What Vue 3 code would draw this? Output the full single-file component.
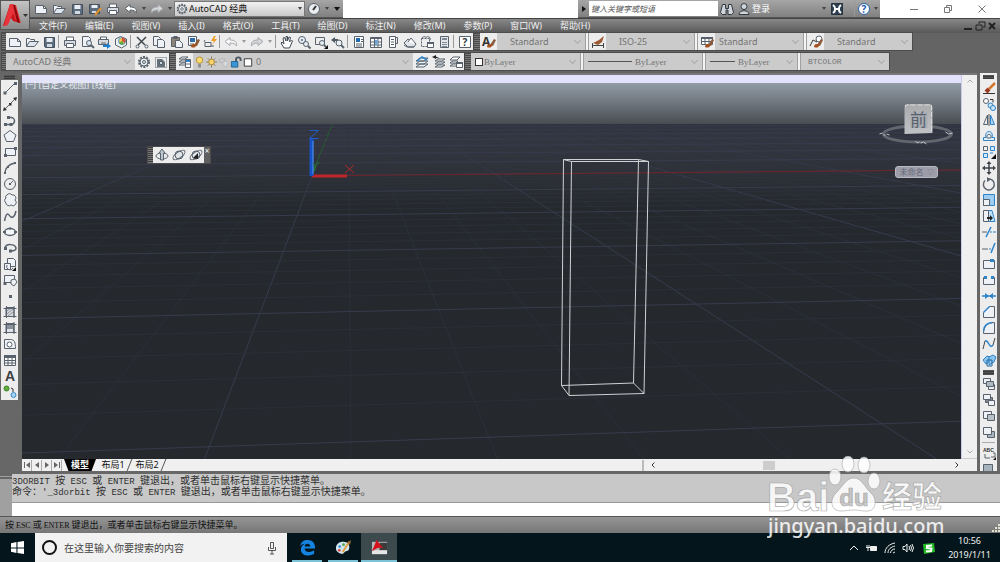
<script setup>
const D = '#59626c'
const B = '#2f83c9'
const s = (d, c = D, w = 1) => `<path d="${d}" fill="none" stroke="${c}" stroke-width="${w}"/>`
const f = (d, c = '#eef1f6', o = D) => `<path d="${d}" fill="${c}" stroke="${o}"/>`
const p = (d, c = D) => `<path d="${d}" fill="${c}"/>`
const c = (x, y, r, fill = 'none', o = D) => `<circle cx="${x}" cy="${y}" r="${r}" fill="${fill}" stroke="${o}"/>`
const brush = p('M9 11l4-6 2 1-3 6z', '#8a5a3a') + p('M6 13c0-3 3-4 5-2 0 3-3 3-5 2z', '#a8501c')

const icons = {
  new: f('M2.500 4.500h8l3 3v5h-11z') + s('M10.500 4.500v3h3'),
  open: f('M2.500 12.500v-8h3l1 1h4v2') + f('M2.500 12.500l3-5h9l-4 5z', '#dfe6ee'),
  save: f('M3.500 3.500h10v10h-9l-1-1z', '#5c6d80', '#46515d') + p('M5.500 4h6v4h-6z', '#e8edf3') + p('M6 10h5v3h-5z', '#d3dae2'),
  saveas: f('M2.500 3.500h10v9h-10z', '#5c6d80', '#46515d') + p('M4.500 4h6v3h-6z', '#e8edf3') + p('M5 10h4v2h-4z', '#d3dae2') + s('M8 14l6-7', '#e0912c', 2),
  print: f('M4.500 7v-4h7v4', '#fff') + f('M2.500 6.500h11v5h-11z', '#d7dce2') + f('M4.500 9.500h7v4h-7z', '#fff'),
  preview: f('M3.500 2.500h6l2 2v8h-8z') + c(10, 9, 2.500, '#dce9f5') + s('M12 11l3 3', D, 2),
  publish: f('M4.500 6v-3h6v3', '#fff') + f('M2.500 5.500h10v5h-10z', '#d7dce2') + s('M5 9h5') + p('M7 11h4V9l4 3-4 3v-2H7z', '#1d7fd1'),
  dwf: f('M2.500 5l5-2.500 6 2.500v6l-5 3-6-3z') + c(9, 7, 3.500, '#f1c34b', '#48a0cf') + p('M9 7V3a4 4 0 013 6z', '#d4513a') + p('M9 7l-3 2a4 4 0 005 1z', '#62a83f'),
  cut: s('M3 3l8 8M12 3l-8 8', '#3e464f', 1.500) + c(3.500, 12.500, 1.500, '#eee') + c(12.500, 12.500, 1.500, '#eee'),
  copy: f('M2.500 2.500h5l2 2v7h-7z') + f('M6.500 5.500h5l2 2v6h-7z'),
  paste: f('M3.500 3.500h8v9h-8z', '#8d8478') + p('M5.500 2h4v3h-4z') + f('M7.500 6.500h4l3 3v4h-7z'),
  match: f('M3.500 2.500h8v9h-8z', '#f6f8fa') + p('M5 4h5v4H5z', '#2e6ca8') + s('M5 10h4') + brush,
  blockedit: s('M3 8.500h6v4h-6z') + s('M3 6l-1 2M9 12h3') + p('M12 2l-3 5h3l-2 4 5-6h-3l2-3z', '#f29a22'),
  undo: f('M2 7.500l5-4v2.500c5 0 7 2 6.500 6-1-2-3-3-6.500-3v2.500z', '#fff'),
  redo: f('M14 7.500l-5-4v2.500c-5 0-7 2-6.500 6 1-2 3-3 6.500-3v2.500z', '#d4d6d9', '#a6a9ad'),
  undoOff: f('M2 7.500l5-4v2.500c5 0 7 2 6.500 6-1-2-3-3-6.500-3v2.500z', '#f6f6f6', '#a6a9ad'),
  pan: f('M5 14l-3-5 1-1 2 2-1-6 1.500-.500L7 7V2.500h1.500V7l1.500-4 1.500.500L10.500 8l2-2 1 1-3 7z', '#fff', '#434b54'),
  zoomrt: c(6, 6, 3.500, '#e8f0f6') + s('M5 6h2M6 5v2') + c(10, 10, 2.500, '#e8f0f6') + s('M12 12l2.500 2.500', D, 2),
  zoomwin: s('M2.500 3.500h9v7h-9z') + c(9, 9, 2.500, '#e8f0f6') + s('M11 11l2 2', D, 2) + p('M15 11v4h-4z', '#111'),
  zoomprev: p('M1 6l4-3v2h3v2H5v2z', '#4f5964') + c(9, 9, 3, '#e8f0f6') + s('M11 11l3 3', D, 2),
  props: f('M3.500 2.500h9v11h-9z', '#fff') + p('M5 4h4v4H5z', '#2468ad') + s('M10 5.500h2M10 7.500h2M5 10h6M5 12h6'),
  dc: f('M2.500 3.500h11v10h-11z', '#fff') + p('M3 3h10v2H3z') + s('M6.500 5v8M10 5v8M3 8h10M3 11h10') + p('M7 6h3v5H7z', '#76a7d4'),
  palettes: f('M4.500 2.500h6v11h-6z', '#fff') + s('M10.500 3.500h2v6h-2M6 5.500h3M6 8h3M6 10.500h3'),
  sheet: f('M2 9l4-4 8 5-2 3H6z', '#dfe5ea') + f('M6 8l3-4 5 6', '#fff') + s('M2 11l3 2h7'),
  markup: s('M3 4c2-3 4 0 5-1s4 0 3 3', D) + `<path d="M2.500 4.500h8v8h-8z" fill="none" stroke="${D}" stroke-dasharray="2 1"/>` + f('M8.500 8.500h6v5h-6z', '#fff') + p('M8 8h7v2H8z'),
  calc: f('M4.500 2.500h8v11h-8z', '#e3e7eb') + p('M6 4h5v2H6z', '#7a8794') + s('M6 8.500h5M6 10.500h5M6 12.500h5', '#7f8992'),
  help: f('M2.500 2.500h11v11h-11z', '#fff') + `<text x="8" y="12" text-anchor="middle" font-size="10" font-weight="700" font-family="Open Sans, sans-serif" fill="#2d3742">?</text>`,
  textStyle: `<text x="1" y="12" font-size="12" font-weight="700" font-family="Open Sans, sans-serif" fill="#333">A</text>` + brush,
  dimStyle: s('M2.500 9v5M13.500 9v5M3 11.500h10', '#444') + p('M3 9l6-3 5-4-2 6-4 3z', '#9d5a32'),
  tableStyle: f('M2.500 3.500h11v7h-11z', '#fff') + p('M2 3h12v2H2z') + s('M6 5v5M10 5v5M3 7.500h10') + brush,
  leaderStyle: s('M2 12l3-6 4 2', '#333') + c(11, 5, 3, '#fff') + brush,
  gear: `<circle cx="8" cy="8" r="5" fill="none" stroke="${D}" stroke-width="2" stroke-dasharray="2 1.140"/>` + c(8, 8, 4, '#edf0f3') + c(8, 8, 1.500),
  wssave: `<path d="M2.500 3.500h11v10h-11z" fill="none" stroke="${D}" stroke-dasharray="1 1"/>` + p('M4 5h5l3 3v5H4z', '#66717c') + f('M6.500 7.500h3v3h-3z', '#cfd6dc'),
  layers: f('M2 5l3-2h6L8 5zM2 8l3-2h6L8 8zM2 11l3-2h5L8 11z', '#fff') + f('M8.500 5.500h5v8h-5z', '#fff') + p('M9 6h4v2H9z', B) + s('M9 10h4'),
  layerMatch: f('M2 7l4-3h8l-4 3zM2 10l4-3h8l-4 3zM2 13l4-3h8l-4 3z', '#eaf4fb') + s('M3 7l5-4 5 3', B, 1.500),
  layerPrev: f('M4 7l3-2h7l-3 2zM4 10l3-2h7l-3 2zM4 13l3-2h7l-3 2z', '#fff') + p('M1 3l4-2v1.500l4 2-4-.500V5z', '#222'),
  layerStates: f('M2 6l3-3h7L9 6zM2 9l3-2h5L8 9zM2 12l3-2h5L8 12z', '#fff') + f('M8.500 8.500h6v5h-6z', '#fff') + p('M8 8h7v2H8z'),
  bulb: c(8, 6, 3.500, '#fbdc74', '#b18b32') + p('M6.500 10h3v4h-3z', '#8b8f94'),
  sun: s('M8 2v12M2 8h12M4 4l8 8M12 4l-8 8', '#87764e') + c(8, 8, 3, '#fbd569', '#a98a38'),
  freeze: s('M3.500 4.500h6v4h-6z', '#b5b7b9') + c(10, 10, 3, '#d7d8d9', '#b5b7b9'),
  lock: s('M8.500 8V5.500a2.500 2.500 0 015 0V7', '#4c565f', 2) + f('M3.500 7.500h7v6h-7z', '#3797d6', '#28628b'),
  swatch: f('M4.500 4.500h8v8h-8z', '#fff', '#333'),
  gauge: c(8, 8, 5.500, '#e9edf0') + s('M7 9l3-4', '#333', 2),
  line: s('M3 13L13 3') + p('M1.500 11.500h3v3h-3zM12 2h3v3h-3z'),
  xline: s('M3 13L13 3') + p('M1 15l1-4 3 3zM15 1l-1 4-3-3zM7 7h2.500v2.500H7z', '#333'),
  pline: s('M3 12.500h6a3.500 3.500 0 000-7H6', D, 1.500) + p('M2 11h3v3H2zM7.500 11h3v3h-3zM5 4h3v3H5z'),
  polygon: f('M8 2.500l6 4.500-2.500 6.500h-7L2 7z'),
  rect: f('M3.500 4.500h10v7h-10z') + p('M2 10h3v3H2zM12 3h3v3h-3z'),
  arc: s('M3 13C3 8 7 4 13 3', D, 1.500) + p('M2 12h2v2H2zM5 6h2v2H5zM12 2h2v2h-2z'),
  circle: c(8, 8, 5.500) + s('M8 8l3-3') + p('M7 7h2v2H7z'),
  cloud: f('M5 3a3 3 0 015 0 3 3 0 013 5 3 3 0 01-4 5 3 3 0 01-5-2 3 3 0 010-5 2 2 0 011-3z'),
  spline: s('M2.500 13C5 1 7 8 9 9s4-1 5-6', D, 1.500),
  ellipse: `<ellipse cx="8" cy="8" rx="5.500" ry="3.500" fill="#f6f7f9" stroke="${D}" stroke-width="1.500"/>` + p('M1 7h3v2H1zM12 7h3v2h-3zM7 3.500h2v2H7z'),
  earc: s('M3 8c1-5 10-4 11 0 0 2-2 3-5 3', D, 1.500) + p('M2 7h3v3H2zM7 9.500h3v3H7z'),
  insert: f('M5.500 2.500h6l2 2v6h-8z') + f('M2.500 7.500h6v6h-6z') + s('M5 9a3 3 0 006 3') + p('M14 11v4h-4z', '#111'),
  block: f('M2.500 3.500h10v7h-10z') + f('M9 8l4-1 2 3-3 4-3-2z') + p('M1.500 10h3v3h-3z'),
  point: p('M7 7h3v3H7z'),
  hatch: f('M4 3.500h8v9H4z', '#d6d9dd') + s('M1.500 4.500h13M1.500 12.500h13M4.500 2v12M12 2v12') + s('M5 7l3-2M5 10l6-5M6 12l5-4', '#8c949c'),
  gradient: f('M4 3.500h8v9H4z', '#8a939d') + s('M1.500 4.500h13M1.500 12.500h13M4.500 2v12M12 2v12') + p('M5 9h6v3H5z', '#dfe3e7'),
  region: f('M2.500 3.500h6c4 0 5 3 5 9h-11z') + c(7.500, 8.500, 2.500, '#fff'),
  table: f('M2.500 3.500h11v10h-11z', '#fff') + p('M2 3h12v3H2z') + s('M6 6v7M10 6v7M3 8.500h10M3 11h10'),
  mtext: `<text x="8" y="13" text-anchor="middle" font-size="14" font-weight="700" font-family="Liberation Sans, sans-serif" fill="#3d3d42">A</text>`,
  addsel: c(4.500, 4.500, 2.500, '#5fae3c', '#3c7f24') + c(11.500, 11, 2.500, '#a5d3f3', '#3b8bc8') + s('M9 4l2 1v3', '#333'),
  erase: s('M8 9l6-6', '#d3762e', 2.500) + s('M5 12l3-3', '#9c3a24', 4) + s('M2 13.500h12', '#333'),
  copyobj: c(5, 5, 2.500, '#fff') + c(9.500, 9.500, 2.500, '#cbe5f8', B) + c(12, 12, 2.500, '#cbe5f8', B) + s('M9 3.500h3v3', '#333'),
  mirror: f('M6.500 3v9.500h-4z') + f('M9.500 3v9.500h4z', '#acd6f4', B) + s('M8 2v12', '#555'),
  offset: f('M2.500 12.500h11v-3h-2.500c2-8-8-8-6 0H2.500z', '#e2f0fa', B) + s('M6 10c-1-5 5-5 4 0z'),
  array: f('M2.500 2.500h4v4h-4z') + f('M9.500 2.500h4v4h-4zM2.500 9.500h4v4h-4z', '#d3eafa', B) + s('M9 9h3', B) + p('M15 10v5h-5z', '#111'),
  move: s('M8 3v10M3 8h10', '#3e444b', 1.500) + p('M8 1l2.500 3h-5zM8 15l2.500-3h-5zM1 8l3-2.500v5zM15 8l-3-2.500v5z', '#3e444b'),
  rotate: s('M7 3a5.500 5.500 0 11-3 1.500', D, 1.500) + p('M6 1l4 2.500L6 6z'),
  scale: f('M2.500 2.500h11v11h-11z', '#9dcdf0', B) + f('M2.500 7.500h6v6h-6z'),
  stretch: f('M7 2.500h4l3 11H7z', '#bfe1f7', B) + f('M2.500 2.500h5v11h-5z') + p('M6 9h3V7l3 3-3 3v-2H6z', '#222'),
  trim: s('M1 8h5') + s('M5 13l5-10', B, 1.500) + s('M9 8h2M12 8h3', B),
  extend: s('M1 9h6') + s('M8 9h2', B) + s('M10 13l4-10', B, 1.500),
  breakpt: f('M2.500 4.500h11v8h-11z', '#eef1f6') + p('M9 3h4v3H9z', B),
  brk: f('M2.500 5.500h11v7h-11z', '#eef1f6') + p('M6 4h4v3H6z', '#ededed') + p('M3 4h3v3H3zM10 4h3v3h-3z', B),
  join: s('M1 8h14', B, 1.500) + p('M4 5l4 3-4 3zM12 5L8 8l4 3z', B),
  chamfer: f('M2.500 13.500v-5l6-6h5v11z') + s('M2.500 8.500l6-6', B, 1.500),
  fillet: f('M2.500 13.500c0-7 4-11 11-11v11z') + s('M2.500 11c0-5 4-8.500 9-8.500', B, 1.500),
  blend: s('M2 13l2-8M12 9l2-7', '#444') + s('M4 5c4-2 4 9 8 4', B, 1.500),
  explode: f('M2 8l4-4 3 1v4l-4 3z', '#8cc6ee', B) + f('M8 5l4-2 3 2-2 5-5 3z', '#8cc6ee', B) + s('M6 8v6h5V8z', '#22659d'),
  dFront: f('M2.500 2.500h7v5h-7z') + f('M7.500 8.500h6v5h-6z') + f('M5.500 5.500h7v5h-7z', '#aeb8c1'),
  dBack: f('M4.500 5.500h7v5h-7z', '#7d8790') + f('M2.500 2.500h7v5h-7z') + f('M7.500 8.500h6v5h-6z'),
  dAbove: f('M2.500 3.500h8v7h-8z') + f('M6.500 6.500h7v6h-7z', '#b9c1c8'),
  dUnder: f('M6.500 7.500h7v6h-7z', '#aab3bb') + f('M2.500 3.500h8v7h-8z'),
  dText: `<text x="2" y="7" font-size="5" font-weight="700" font-family="Liberation Sans, sans-serif" fill="#333">ABC</text>` + s('M4 9v4h5M12 8h2v4h-4') + p('M15 12v3h-3z', '#111'),
  dHatch: f('M2.500 3.500h9v8h-9z', '#a6b3bd') + s('M12 13h3'),
  orbitFree: `<ellipse cx="8" cy="9" rx="6" ry="3" fill="none" stroke="${D}"/>` + f('M6.500 13V6H5l3-4 3 4H9.500v7z', '#bfc7ce'),
  orbit: c(8, 8, 4, '#e0e5ea') + `<ellipse cx="8" cy="8" rx="7" ry="3" fill="none" stroke="${D}" transform="rotate(-35 8 8)"/>`,
  orbitCont: c(8, 8, 4, '#e0e5ea') + `<ellipse cx="8" cy="8" rx="7" ry="3" fill="none" stroke="${D}" transform="rotate(-35 8 8)"/>` + p('M5 11l5-5v6z', '#222'),
  binoculars: f('M3.500 3.500h3v4h3v-4h3l2 8-2 2H9V9H7v4.500H3.500l-2-2z', '#cfd5da', '#333a42'),
  user: c(8, 5.500, 3, '#cfd5da', '#333a42') + f('M3 13.500c0-5 10-5 10 0z', '#cfd5da', '#333a42'),
  exchange: f('M2.500 2.500h11v11h-11z', '#2f4052', '#27313b') + s('M4 4c3 2 3 6 0 8M12 4c-3 2-3 6 0 8M5 8h6', '#fff', 2),
  qmark: c(8, 8, 5.500, '#fff', '#2a60a5') + `<text x="8" y="12" text-anchor="middle" font-size="10" font-weight="700" font-family="Open Sans, sans-serif" fill="#1f5cb0">?</text>`,
}

const quick = ['new', 'open', 'save', 'saveas', 'print', 'undo', '>', 'redo', '>']
const menus = ['文件(F)', '编辑(E)', '视图(V)', '插入(I)', '格式(O)', '工具(T)', '绘图(D)', '标注(N)', '修改(M)', '参数(P)', '窗口(W)', '帮助(H)']
const standard = ['new', 'open', 'save', '|', 'print', 'preview', 'publish', 'dwf', '|', 'cut', 'copy', 'paste', 'match', 'blockedit', '|', 'undoOff', '>', 'redo', '>', '|', 'pan', 'zoomrt', 'zoomwin', 'zoomprev', '|', 'props', 'dc', 'palettes', 'sheet', 'markup', 'calc', '|', 'help']
const styles = [['textStyle', 'Standard'], ['dimStyle', 'ISO-25'], ['tableStyle', 'Standard'], ['leaderStyle', 'Standard']]
const draw = ['line', 'xline', 'pline', 'polygon', 'rect', 'arc', 'circle', 'cloud', 'spline', 'ellipse', 'earc', 'insert', 'block', 'point', 'hatch', 'gradient', 'region', 'table', 'mtext', 'addsel']
const modify = ['erase', 'copyobj', 'mirror', 'offset', 'array', 'move', 'rotate', 'scale', 'stretch', 'trim', 'extend', 'breakpt', 'brk', 'join', 'chamfer', 'fillet', 'blend', 'explode']
const order = ['dFront', 'dBack', 'dAbove', 'dUnder', '|', 'dText', 'dHatch']

const rows = []
for (let i = -2; i < 66; i++) {
  const k = i / 5
  rows.push({ y1: 80 + 1 / (0.00268 + 0.00151 * k), y2: 81 + 1 / (0.00294 + 0.00166 * k), major: i % 5 === 0 })
}
const rays = []
for (let n = -45; n < 65; n++) rays.push({ x: 205 + 146.4 * n, major: n % 5 === 0 })
</script>

<template>
  <div class="app">
    <header class="head">
      <button class="logo" aria-label="AutoCAD">
        <svg viewBox="0 0 29 29" class="logo-art">
          <path d="M9 3l5 1 5 18-7-2-2-3-3 2-1 5-4 1z" fill="#c9141b" />
          <path d="M9 3L3 25l4-1 5-12 3 8 5 2-5-18z" fill="#e8343a" />
          <path d="M14 4l5 18-3-1-4-17z" fill="#8f0b10" />
          <path d="M22 13h5l-2.500 3z" fill="#333" />
        </svg>
      </button>
      <div class="head-main">
        <div class="title">
          <div class="quick">
            <template v-for="(n, i) in quick" :key="i">
              <span v-if="n === '>'" class="caret"></span>
              <button v-else class="qbtn" :aria-label="n"><svg class="icon" viewBox="0 0 16 16" v-html="icons[n]"></svg></button>
            </template>
            <label class="ws">
              <svg class="icon" viewBox="0 0 16 16" v-html="icons.gear"></svg>
              <select aria-label="工作空间"><option>AutoCAD 经典</option></select>
              <span class="caret"></span>
            </label>
            <button class="qbtn" aria-label="gauge"><svg class="icon" viewBox="0 0 16 16" v-html="icons.gauge"></svg></button>
            <span class="caret"></span>
            <span class="caret big"></span>
          </div>
          <div class="blank"></div>
          <div class="info">
            <span class="play"></span>
            <input class="search" placeholder="键入关键字或短语" aria-label="搜索" />
            <button class="qbtn" aria-label="查找"><svg class="icon" viewBox="0 0 16 16" v-html="icons.binoculars"></svg></button>
            <button class="login"><svg class="icon" viewBox="0 0 16 16" v-html="icons.user"></svg>登录</button>
            <span class="caret"></span>
            <button class="qbtn" aria-label="Exchange"><svg class="icon" viewBox="0 0 16 16" v-html="icons.exchange"></svg></button>
            <button class="qbtn help" aria-label="帮助"><svg class="icon" viewBox="0 0 16 16" v-html="icons.qmark"></svg></button>
            <span class="caret"></span>
          </div>
          <div class="win">
            <button aria-label="最小化"><svg viewBox="0 0 12 12"><path d="M2 6.500h8" /></svg></button>
            <button aria-label="还原"><svg viewBox="0 0 12 12"><path d="M2.500 4.500h5v5h-5zM4.500 4V2.500h5v5H8" /></svg></button>
            <button aria-label="关闭"><svg viewBox="0 0 12 12"><path d="M2.500 2.500l7 7M9.500 2.500l-7 7" /></svg></button>
          </div>
        </div>
        <nav class="menu">
          <a v-for="m in menus" :key="m" href="#">{{ m }}</a>
          <div class="docwin">
            <button aria-label="最小化"><svg viewBox="0 0 12 12"><path d="M2 9h8" /></svg></button>
            <button aria-label="还原"><svg viewBox="0 0 12 12"><path d="M2 5h6v5H2zM5 4V2h6v5H9" /></svg></button>
            <button aria-label="关闭"><svg viewBox="0 0 12 12"><path d="M3 3l6 6M9 3l-6 6" /></svg></button>
          </div>
        </nav>
      </div>
    </header>

    <div class="bars">
      <div class="bar">
        <span class="grip"></span>
        <div class="tools">
          <template v-for="(n, i) in standard" :key="i">
            <span v-if="n === '|'" class="sep"></span>
            <span v-else-if="n === '>'" class="caret pale"></span>
            <button v-else class="tbtn" :aria-label="n"><svg class="icon" viewBox="0 0 16 16" v-html="icons[n]"></svg></button>
          </template>
        </div>
        <span class="grip wide"></span>
        <template v-for="(st, i) in styles" :key="st[0]">
          <span v-if="i" class="split"></span>
          <button class="tbtn lit" :aria-label="st[0]"><svg class="icon" viewBox="0 0 16 16" v-html="icons[st[0]]"></svg></button>
          <label class="combo style" :class="st[0]"><select :aria-label="st[0]"><option>{{ st[1] }}</option></select></label>
        </template>
      </div>
      <div class="bar">
        <span class="grip"></span>
        <label class="combo space"><select aria-label="工作空间"><option>AutoCAD 经典</option></select></label>
        <div class="tools">
          <button class="tbtn" aria-label="设置"><svg class="icon" viewBox="0 0 16 16" v-html="icons.gear"></svg></button>
          <button class="tbtn" aria-label="保存"><svg class="icon" viewBox="0 0 16 16" v-html="icons.wssave"></svg></button>
        </div>
        <span class="grip wide"></span>
        <button class="tbtn lit" aria-label="图层"><svg class="icon" viewBox="0 0 16 16" v-html="icons.layers"></svg></button>
        <label class="combo layer">
          <span class="marks"><svg v-for="n in ['bulb', 'sun', 'freeze', 'lock', 'swatch']" :key="n" class="mark" viewBox="2 1 13 14" v-html="icons[n]"></svg></span>
          <select aria-label="图层"><option>0</option></select>
        </label>
        <div class="tools">
          <button v-for="n in ['layerMatch', 'layerPrev', 'layerStates']" :key="n" class="tbtn" :aria-label="n"><svg class="icon" viewBox="0 0 16 16" v-html="icons[n]"></svg></button>
        </div>
        <span class="grip wide"></span>
        <label class="combo color"><span class="box"></span><select aria-label="颜色"><option>ByLayer</option></select></label>
        <span class="split"></span>
        <label class="combo ltype"><span class="rule"></span><select aria-label="线型"><option>ByLayer</option></select></label>
        <span class="split"></span>
        <label class="combo lweight"><span class="rule"></span><select aria-label="线宽"><option>ByLayer</option></select></label>
        <span class="split"></span>
        <label class="combo plot"><select aria-label="打印样式"><option>BTCOLOR</option></select></label>
      </div>
    </div>

    <main class="work">
      <aside class="side">
        <span class="hgrip"></span>
        <button v-for="n in draw" :key="n" class="sbtn" :aria-label="n"><svg class="icon" viewBox="0 0 16 16" v-html="icons[n]"></svg></button>
      </aside>

      <section class="frame">
        <div class="canvas">
          <svg class="scene" viewBox="22 75 940 384" preserveAspectRatio="xMidYMid slice">
            <defs>
              <linearGradient id="sky" x1="0" y1="0" x2="0" y2="1">
                <stop offset="0" stop-color="#929ca6" /><stop offset="0.500" stop-color="#6d747c" /><stop offset="1" stop-color="#474b50" />
              </linearGradient>
              <linearGradient id="ground" x1="0" y1="0" x2="0" y2="1">
                <stop offset="0" stop-color="#3c3f49" /><stop offset="0.120" stop-color="#30333a" /><stop offset="0.250" stop-color="#25292e" /><stop offset="1" stop-color="#25282d" />
              </linearGradient>
              <linearGradient id="cube" x1="0" y1="0" x2="0" y2="1">
                <stop offset="0" stop-color="#a9abad" /><stop offset="1" stop-color="#c1c2c5" />
              </linearGradient>
              <clipPath id="floor"><path d="M22 124h940v335H22z" /></clipPath>
            </defs>
            <path d="M22 75h940v8H22z" fill="#e2e2fc" />
            <path d="M22 83h940v42H22z" fill="url(#sky)" />
            <path d="M22 124h940v335H22z" fill="url(#ground)" />
            <g clip-path="url(#floor)">
              <line v-for="(r, i) in rays" :key="'v' + i" x1="349" y1="80" :x2="r.x" y2="459" :class="r.major ? 'major' : 'minor'" />
              <line v-for="(r, i) in rows" :key="'h' + i" x1="22" :y1="r.y1" x2="962" :y2="r.y2" :class="r.major ? 'major' : 'minor'" />
            </g>
            <path d="M348 175.500L962 170" stroke="#6e2429" />
            <path d="M314 170l19-46" stroke="#25622c" stroke-dasharray="5 1" />
            <path d="M312.500 176h35" stroke="#c12626" stroke-width="3" />
            <path d="M312 176v-37" stroke="#1554c4" stroke-width="4" />
            <path d="M313.500 174v-33" stroke="#5c92ea" />
            <path d="M310 130.500h9l-9 8h9" fill="none" stroke="#1f5dcb" />
            <path d="M313 163l3 3 4-4M316 166l-1 5" fill="none" stroke="#21852d" />
            <path d="M345.500 165l9 8M354.500 165l-9 8" stroke="#b02a2d" />
            <g class="wire">
              <path d="M564 159.500L639 159.500L649 161.500L572 161.500Z" />
              <path d="M562 385.500L634 383L644.500 393.500L569.500 395.500Z" />
              <path d="M564 159.500L562 385.500M639 159.500L634 383M649 161.500L644.500 393.500M572 161.500L569.500 395.500" />
            </g>
            <ellipse cx="918" cy="134" rx="34" ry="8" fill="none" stroke="#62666f" stroke-width="3" />
            <path d="M905 107l3-3h23l2 3v26l-28 1z" fill="url(#cube)" />
            <path d="M906 107v-2h26v28" fill="none" stroke="#dadbdd" stroke-dasharray="5 2" />
            <path d="M911 112h17v16h-17z" fill="#a8acb3" />
            <text x="919" y="126" text-anchor="middle" class="face">前</text>
            <g class="compass"><path d="M880 134l3-1M884 135h2M887 134l3 1M946 132l3 2M949 134l4-1M916 141l2 2 2-1M921 143l3-1 3 2" /></g>
          </svg>
          <span class="vlabel">[−] [自定义视图] [线框]</span>
          <div class="float">
            <span class="fgrip"></span>
            <button v-for="n in ['orbitFree', 'orbit', 'orbitCont']" :key="n" class="tbtn" :aria-label="n"><svg class="icon" viewBox="0 0 16 16" v-html="icons[n]"></svg></button>
            <button class="fclose" aria-label="关闭">×</button>
          </div>
          <button class="ucs">未命名 <i>▽</i></button>
        </div>
        <div class="vscroll">
          <svg viewBox="0 0 8 8"><path d="M1.500 5.500L4 3l2.500 2.500" /></svg>
          <svg viewBox="0 0 8 8"><path d="M1.500 2.500L4 5l2.500-2.500" /></svg>
        </div>
        <div class="tabs">
          <div class="nav">
            <button aria-label="首页"><svg viewBox="0 0 8 8"><path d="M1 1h1v6H1zM7 1v6L3 4z" /></svg></button>
            <button aria-label="上一个"><svg viewBox="0 0 8 8"><path d="M6 1v6L2 4z" /></svg></button>
            <button aria-label="下一个"><svg viewBox="0 0 8 8"><path d="M2 1v6l4-3z" /></svg></button>
            <button aria-label="末页"><svg viewBox="0 0 8 8"><path d="M6 1h1v6H6zM1 1v6l4-3z" /></svg></button>
          </div>
          <button class="tab on">模型</button>
          <button class="tab">布局1</button>
          <button class="tab">布局2</button>
          <div class="hscroll">
            <svg viewBox="0 0 8 8"><path d="M5.500 1.500L3 4l2.500 2.500" /></svg>
            <span class="thumb"></span>
            <svg viewBox="0 0 8 8"><path d="M2.500 1.500L5 4 2.500 6.500" /></svg>
          </div>
        </div>
      </section>

      <aside class="side right">
        <span class="hgrip"></span>
        <button v-for="n in modify" :key="n" class="sbtn" :aria-label="n"><svg class="icon" viewBox="0 0 16 16" v-html="icons[n]"></svg></button>
        <span class="hgrip tall"></span>
        <template v-for="n in order" :key="n">
          <span v-if="n === '|'" class="hsep"></span>
          <button v-else class="sbtn" :aria-label="n"><svg class="icon" viewBox="0 0 16 16" v-html="icons[n]"></svg></button>
        </template>
      </aside>
    </main>

    <section class="cmd">
      <div class="cgrip"></div>
      <div class="cmain">
        <div class="history">
          <p><span class="la">3DORBIT </span>按<span class="la"> ESC </span>或<span class="la"> ENTER </span>键退出，或者单击鼠标右键显示快捷菜单。</p>
          <p>命令：<span class="la">'_3dorbit </span>按<span class="la"> ESC </span>或<span class="la"> ENTER </span>键退出，或者单击鼠标右键显示快捷菜单。</p>
        </div>
        <input class="prompt" aria-label="命令" />
      </div>
    </section>
    <footer class="status">
      <span>按<span class="la"> ESC </span>或<span class="la"> ENTER </span>键退出，或者单击鼠标右键显示快捷菜单。</span>
      <svg class="corner" viewBox="0 0 9 9"><path d="M7 1h2v2H7zM4 4h2v2H4zM7 4h2v2H7zM1 7h2v2H1zM4 7h2v2H4zM7 7h2v2H7z" fill="#e4e0d2" /></svg>
    </footer>

    <footer class="task">
      <button class="start" aria-label="开始"><svg viewBox="0 0 12 12"><path d="M0 2l5-1v5H0zM6 1l6-1v6H6zM0 7h5v4l-5-1zM6 7h6v5l-6-1z" fill="#fff" /></svg></button>
      <label class="find">
        <span class="ring"></span>
        <input placeholder="在这里输入你要搜索的内容" aria-label="搜索" />
        <svg class="mic" viewBox="0 0 12 14"><path d="M4.500 1.500h3v6h-3zM2.500 6v3.500h7V6M6 9.500V13M4 13h4" fill="none" stroke="#555" /></svg>
      </label>
      <button class="app-btn" aria-label="Edge">
        <svg viewBox="0 0 18 18"><path d="M1 8C2 3 5 1 9 1c5 0 8 3 8 8v1H6c0 4 6 5 10 2v4C9 19 2 17 2 11c0-3 2-5 4-6-2 0-4 1-5 3zm5 0h6c0-4-6-4-6 0z" fill="#1583e0" /></svg>
      </button>
      <button class="app-btn" aria-label="画图">
        <svg viewBox="0 0 18 18"><path d="M1 10C1 5 5 3 9 3s7 3 6 7-4 2-5 4-3 2-5 1-4-2-4-5z" fill="#d4e6f2" /><circle cx="5" cy="8" r="1.500" fill="#3f8fd0" /><circle cx="9" cy="6" r="1.500" fill="#58a845" /><circle cx="4.500" cy="12" r="1.500" fill="#d64f3d" /><path d="M8 14l7-11" stroke="#e0a040" stroke-width="2" /><path d="M13 4l4-3-1 5z" fill="#9a6b36" /></svg>
      </button>
      <button class="app-btn on" aria-label="AutoCAD">
        <svg viewBox="0 0 18 18"><path d="M1 3h16v13H1z" fill="#b9b9b9" /><path d="M9 4h8v8H9z" fill="#3b3b3b" /><path d="M1 12h16v4H1z" fill="#e6e6e6" /><path d="M6 1l7 9-4-1-3 1-5 3z" fill="#d3141d" /></svg>
      </button>
      <div class="tray">
        <svg viewBox="0 0 12 12"><path d="M2 8l4-4 4 4" /></svg>
        <svg viewBox="0 0 12 12"><path d="M4.500 4.500h6v4h-6z" fill="#eee" /><path d="M1 3v2M3 3v2M0 5.500h4M2 6v3" /></svg>
        <svg viewBox="0 0 12 12"><path d="M1 11C1 6 5 2 11 1M4 11c0-4 3-6 7-7M6.500 11c0-2 2-4 4.500-4M9 11l2-1" /></svg>
        <svg viewBox="0 0 12 12"><path d="M1 4.500h2L5 2v8L3 7.500H1zM7 4q1 2 0 4M8.500 3q2 3 0 6M10 2q3 4 0 8" /></svg>
        <svg viewBox="0 0 12 12" class="sogou"><path d="M0 2l11-1 1 9-11 2z" fill="#24ba27" stroke="none" /><path d="M9 3.500L4 4v2l4.500.500L8 9l-5 .500" stroke-width="2" stroke="#fff" /></svg>
      </div>
      <div class="clock"><span>10:56</span><span>2019/1/11</span></div>
    </footer>

    <svg class="brand" viewBox="0 0 180 86">
      <g fill="#fff" stroke="#a2a2a2" stroke-width="0.700">
        <text x="0" y="55" class="bai">Bai</text>
        <ellipse cx="68" cy="21" rx="6" ry="8" /><ellipse cx="81" cy="8" rx="6" ry="8" /><ellipse cx="97" cy="9" rx="6" ry="8" /><ellipse cx="107" cy="25" rx="6" ry="8" />
        <path d="M87 22c8 0 11 10 17 15s6 18-4 18c-7 0-8-1-13-1s-8 1-13 1c-10 0-12-11-5-18s10-15 18-15z" />
        <text x="87" y="50" text-anchor="middle" class="du">du</text>
        <text x="115" y="51" class="jy">经验</text>
      </g>
      <text x="1" y="77" fill="#fff" class="url">jingyan.baidu.com</text>
    </svg>
  </div>
</template>

<style>
body { background: #666; }
</style>

<style scoped>
.app { position: relative; display: flex; flex-direction: column; height: 100vh; overflow: hidden; background: #676767; font: 9px/12px "Noto Sans", "Noto Sans CJK SC", sans-serif; color: #222; }
.app *, .app *::before { box-sizing: border-box; }
button, select, input { font: inherit; color: inherit; border: 0; padding: 0; margin: 0; background: none; border-radius: 0; outline: 0; }
select { appearance: none; }
button { display: flex; align-items: center; justify-content: center; flex: none; }
svg { display: block; flex: none; }
.icon { width: 16px; height: 16px; }

.head { display: flex; height: 33px; flex: none; background: #6a6a6a; }
.logo { width: 30px; height: 30px; background: linear-gradient(#c4c4c4, #8a8a8a); border: 1px solid #555; }
.logo-art { width: 29px; height: 29px; }
.head-main { flex: 1; min-width: 0; display: flex; flex-direction: column; }
.title { display: flex; height: 18px; }
.quick { display: flex; align-items: center; padding-left: 2px; background: linear-gradient(#a6a6a6, #808080); border-bottom: 1px solid #555; }
.qbtn { width: 18px; height: 17px; }
.caret { width: 8px; height: 16px; flex: none; display: grid; place-items: center; }
.caret::before { content: ""; border: 2px solid transparent; border-top: 3px solid #444; border-bottom: 0; }
.caret.big { width: 12px; }
.caret.big::before { border-width: 4px 3px 0; border-top-color: #111; }
.caret.pale { width: 9px; }
.caret.pale::before { border-top-color: #999; }
.ws { display: flex; align-items: center; width: 131px; height: 16px; background: linear-gradient(#f2f2f2, #c9c9c9); border: 1px solid #777; }
.ws .icon { width: 14px; }
.ws select { flex: 1; min-width: 0; font-size: 9px; height: 14px; color: #111; }
.blank { flex: 1; background: #fff; }
.info { display: flex; align-items: center; width: 302px; background: linear-gradient(#a6a6a6, #808080); border-bottom: 1px solid #555; }
.play { width: 11px; height: 17px; flex: none; display: grid; place-items: center; }
.play::before { content: ""; border: 3px solid transparent; border-left: 4px solid #111; border-right: 0; }
.search { flex: 1; min-width: 0; height: 15px; background: #fff; padding-left: 2px; font-style: italic; font-size: 8px; }
.search::placeholder { color: #555; opacity: 1; }
.login { width: 84px; height: 17px; justify-content: flex-start; color: #fff; }
.help { margin-left: 8px; border-left: 1px solid #999; }
.win { width: 120px; background: #fff; display: flex; justify-content: space-between; align-items: center; padding: 0 12px 0 28px; }
.win svg, .docwin svg { width: 12px; height: 12px; fill: none; stroke: #777; }
.menu { display: flex; gap: 18px; height: 15px; align-items: center; padding-left: 9px; background: linear-gradient(#888, #585858); border-top: 1px solid #444; }
.menu a { color: #f0f0f0; text-decoration: none; white-space: nowrap; font: 9px/14px "Noto Sans", "Noto Sans CJK SC", sans-serif; }
.docwin { margin-left: auto; display: flex; padding-right: 2px; }
.docwin svg { stroke: #222; stroke-width: 2; }
.docwin button + button svg { stroke-width: 1; }
.docwin button + button + button svg { stroke-width: 2; }

.bars { display: flex; flex-direction: column; gap: 3px; padding: 0 2px 3px; align-items: flex-start; flex: none; background: #646464; }
.bar { display: flex; height: 17px; background: #cbcbcb; outline: 1px solid #4c4c4c; }
.grip { width: 4px; flex: none; background: repeating-linear-gradient(#4a4a4a 0 1px, #777 1px 2px); }
.grip.wide { width: 7px; border-left: 1px solid #444; }
.tools { display: flex; align-items: center; background: #ededed; }
.tbtn { width: 17px; height: 17px; }
.lit { background: #ededed; }
.sep { width: 1px; height: 13px; background: #999; margin: 0 2px 0 1px; flex: none; }
.split { width: 4px; background: #f4f4f4; border-left: 1px solid #a0a0a0; border-right: 1px solid #a0a0a0; flex: none; }
.combo { position: relative; display: flex; background: #cbcbcb; color: #747474; }
.combo::after { content: ""; position: absolute; right: 5px; top: 5px; width: 4px; height: 4px; border: solid #aaa; border-width: 0 1px 1px 0; transform: rotate(45deg); }
.combo select { width: 100%; height: 17px; color: #747474; }
.style { width: 88px; }
.style select { padding-left: 13px; }
.tableStyle select { padding-left: 4px; }
.space { width: 129px; }
.space select { padding-left: 7px; }
.layer { width: 220px; }
.marks { display: flex; align-items: center; padding-left: 1px; flex: none; }
.mark { width: 12px; height: 14px; }
.layer select { padding-left: 2px; }
.color, .ltype, .lweight { font-family: "Liberation Serif", serif; }
.color { width: 109px; align-items: center; }
.box { width: 8px; height: 8px; flex: none; margin: 0 1px 0 4px; border: 1px solid #333; background: #fff; }
.ltype { width: 118px; align-items: center; }
.rule { flex: none; width: 44px; height: 1px; margin: 0 3px 0 4px; background: #555; }
.lweight { width: 91px; align-items: center; }
.lweight .rule { width: 25px; }
.plot { width: 88px; font: 8px "Liberation Mono", monospace; }
.plot select { padding-left: 7px; }

.work { flex: 1; min-height: 0; display: flex; }
.side { width: 17px; flex: none; margin: 0 4px 0 1px; overflow: hidden; }
.side.right { margin: 0 3px; background: #ededed; }
.sbtn { width: 17px; height: 16px; background: #ededed; }
.hgrip { display: block; height: 7px; background: repeating-linear-gradient(#555 0 1px, #3a3a3a 1px 2px) content-box #5b5b5b; padding: 2px 3px 1px; }
.hgrip.tall { height: 8px; }
.hsep { display: block; height: 1px; margin: 2px; background: #aaa; }
.frame { flex: 1; min-width: 0; display: grid; grid-template: minmax(0, 1fr) 12px / minmax(0, 1fr) 15px; border-top: 2px solid #777; background: #f0f0f0; }
.canvas { position: relative; overflow: hidden; border-right: 1px solid #c9c9e8; }
.scene { width: 100%; height: 100%; }
.major { stroke: #383b4d; stroke-width: 1; }
.minor { stroke: #31333f; stroke-width: 1; stroke-opacity: 0.6; }
.wire path { fill: none; stroke: #cfd1d3; }
.face { font: 17px "Noto Sans CJK SC", sans-serif; fill: #5a616c; }
.compass path { fill: none; stroke: #c5c5ca; stroke-width: 1; }
.vlabel { position: absolute; left: 3px; top: 4px; color: #e9ebf0; white-space: nowrap; }
.float { position: absolute; left: 126px; top: 72px; height: 16px; display: flex; background: #ededed; outline: 1px solid #4b4b4b; }
.float .tbtn { height: 16px; }
.fgrip { width: 5px; background: repeating-linear-gradient(#3d3d3d 0 1px, #777 1px 2px); }
.fclose { width: 6px; background: #5f5f5f; color: #fff; font-size: 8px; line-height: 8px; align-items: flex-start; }
.ucs { position: absolute; right: 23px; top: 91px; width: 43px; height: 12px; border: 1px solid #b8b9c2; border-radius: 3px; background: #9c9da9; color: #666878; gap: 4px; font-size: 8px; line-height: 10px; }
.ucs i { font-style: normal; font-size: 6px; }
.vscroll { display: flex; flex-direction: column; justify-content: space-between; align-items: center; padding: 2px 0; border-bottom: 1px solid #ccc; }
.vscroll svg, .hscroll svg { width: 8px; height: 8px; fill: none; stroke: #aaa; }
.hscroll svg { stroke: #333; }
.tabs { grid-column: 1 / 3; display: flex; align-items: center; background: #f0f0f0; padding-right: 16px; }
.nav { display: flex; }
.nav button { width: 10px; height: 11px; border-right: 1px solid #aaa; }
.nav svg { width: 8px; height: 8px; fill: #666; }
.tab { position: relative; height: 12px; width: 34px; font: 9px/12px "Noto Sans", "Noto Sans CJK SC", sans-serif; color: #111; }
.tab::after { content: ""; position: absolute; right: 0; top: 0; height: 12px; border-right: 1px solid #555; transform: skewX(-22deg); }
.tab.on { margin-left: 2px; width: 32px; color: #fff; background: #000; clip-path: polygon(0 0, 100% 0, 86% 100%, 14% 100%); font-weight: 700; }
.hscroll { margin-left: auto; width: 34%; display: flex; align-items: center; justify-content: space-between; height: 11px; padding-left: 5px; border-left: 2px solid #bbb; }
.thumb { width: 12px; height: 9px; background: #cdcdcd; margin-left: auto; margin-right: 57%; }

.cmd { display: flex; flex: none; margin-top: 3px; border-bottom: 1px solid #555; height: 43px; }
.cgrip { width: 12px; background: #a0a0a0; border-top: 5px double #666; }
.cmain { flex: 1; display: flex; flex-direction: column; min-width: 0; }
.history { height: 29px; background: #c8c8c8; font: 10px/11px "Noto Sans CJK SC", sans-serif; color: #303030; border-bottom: 1px solid #999; }
.history p { margin: 0; white-space: pre; height: 11px; line-height: 11px; }
.history .la { font: 9px/9px "Liberation Mono", monospace; }
.prompt { flex: 1; background: #fff; }
.status { display: flex; align-items: center; height: 16px; flex: none; padding-left: 5px; background: linear-gradient(#959595, #767676); color: #111; font: 9px/12px "Noto Sans CJK SC", sans-serif; white-space: pre; }
.status .la { font: 8px "Liberation Serif", serif; }
.corner { width: 9px; height: 9px; margin: 5px 0 0 auto; }

.task { display: flex; align-items: stretch; height: 29px; flex: none; background: #04161c; color: #f2f2f2; }
.start { width: 35px; }
.start svg { width: 13px; height: 13px; }
.find { display: flex; align-items: center; width: 252px; background: #f2f2f2; padding: 0 9px 0 7px; margin-right: 2px; }
.ring { width: 15px; height: 15px; border: 2px solid #111; border-radius: 50%; flex: none; }
.find input { flex: 1; min-width: 0; padding-left: 7px; font-size: 10px; }
.find input::placeholder { color: #444; opacity: 1; }
.mic { width: 12px; height: 14px; }
.app-btn { width: 36px; position: relative; }
.app-btn svg { width: 17px; height: 17px; }
.app-btn::after { content: ""; position: absolute; left: 3px; right: 3px; bottom: 0; height: 2px; background: #7cc3d8; }
.app-btn.on { background: #3c4a4e; }
.app-btn.on::after { left: 0; right: 0; }
.tray { margin-left: auto; display: flex; align-items: center; gap: 6px; margin-right: 10px; }
.tray svg { width: 12px; height: 12px; fill: none; stroke: #eee; }
.tray .sogou { margin-left: 3px; }
.clock { width: 49px; display: flex; flex-direction: column; justify-content: center; align-items: center; font: 9px/14px "Noto Sans", sans-serif; margin-right: 6px; }
.brand { position: absolute; right: 53px; bottom: 20px; width: 180px; height: 86px; opacity: 0.85; pointer-events: none; }
.bai { font: 700 40px "Liberation Sans", sans-serif; }
.du { font: 700 24px "Liberation Sans", sans-serif; fill: #c4c4c4; }
.jy { font: 700 30px "Noto Sans CJK SC", sans-serif; }
.url { font: 500 20px "Noto Sans", sans-serif; }
</style>
